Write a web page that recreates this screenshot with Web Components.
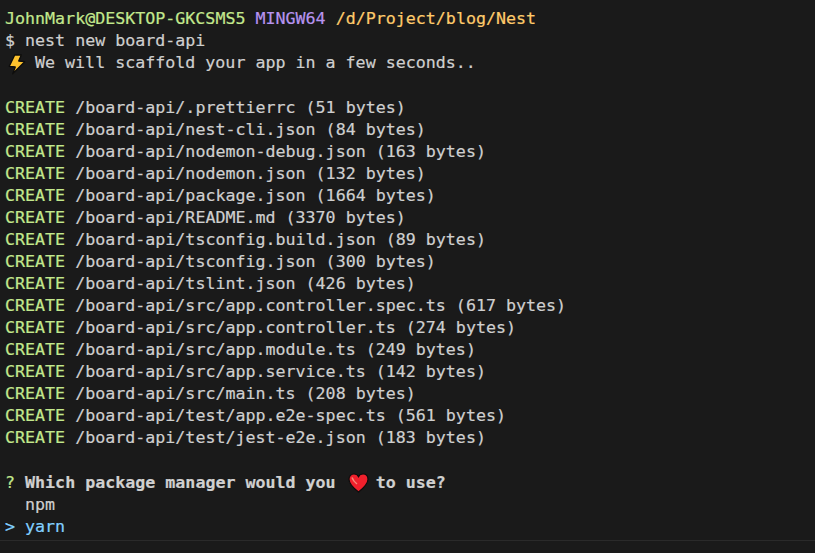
<!DOCTYPE html>
<html>
<head>
<meta charset="utf-8">
<title>Terminal</title>
<style>
  html, body { margin: 0; height: 100%; background: #1a1a1a; }
</style>
</head>
<body>
<term-window>
  <term-line><c-t k="green">JohnMark@DESKTOP-GKCSMS5</c-t> <c-t k="purple">MINGW64</c-t> <c-t k="yellow">/d/Project/blog/Nest</c-t></term-line>
  <term-line>$ nest new board-api</term-line>
  <term-line><term-icon name="bolt"></term-icon> We will scaffold your app in a few seconds..</term-line>
  <term-line blank></term-line>
  <create-line>/board-api/.prettierrc (51 bytes)</create-line>
  <create-line>/board-api/nest-cli.json (84 bytes)</create-line>
  <create-line>/board-api/nodemon-debug.json (163 bytes)</create-line>
  <create-line>/board-api/nodemon.json (132 bytes)</create-line>
  <create-line>/board-api/package.json (1664 bytes)</create-line>
  <create-line>/board-api/README.md (3370 bytes)</create-line>
  <create-line>/board-api/tsconfig.build.json (89 bytes)</create-line>
  <create-line>/board-api/tsconfig.json (300 bytes)</create-line>
  <create-line>/board-api/tslint.json (426 bytes)</create-line>
  <create-line>/board-api/src/app.controller.spec.ts (617 bytes)</create-line>
  <create-line>/board-api/src/app.controller.ts (274 bytes)</create-line>
  <create-line>/board-api/src/app.module.ts (249 bytes)</create-line>
  <create-line>/board-api/src/app.service.ts (142 bytes)</create-line>
  <create-line>/board-api/src/main.ts (208 bytes)</create-line>
  <create-line>/board-api/test/app.e2e-spec.ts (561 bytes)</create-line>
  <create-line>/board-api/test/jest-e2e.json (183 bytes)</create-line>
  <term-line blank></term-line>
  <term-line><c-t k="green">?</c-t> <c-t k="bold">Which package manager would you <term-icon name="heart"></term-icon> to use?</c-t></term-line>
  <term-line>  npm</term-line>
  <term-line><c-t k="cyan">&gt; yarn</c-t></term-line>
</term-window>
<script>
// lines use white-space: pre, so the shadow markup below must not have whitespace between nodes
class TermWindow extends HTMLElement {
  connectedCallback() {
    this.attachShadow({ mode: 'open' });
    this.shadowRoot.innerHTML = `<style>
        :host {
          display: block;
          height: 553px;
          background: #1a1a1a;
          color: #cfcfcf;
          font-family: "DejaVu Sans Mono", monospace;
          font-size: 16.65px;
          -webkit-text-stroke: 0.2px;
          overflow: hidden;
        }
        .body { padding: 8px 0 0 5px; height: 541px; box-sizing: border-box; border-bottom: 1px solid #2a2a2a; }
      </style><div class="body"><slot></slot></div>`;
  }
}

class TermLine extends HTMLElement {
  connectedCallback() {
    this.attachShadow({ mode: 'open' });
    this.shadowRoot.innerHTML = `<style>
        :host { display: block; height: 22px; line-height: 22px; white-space: pre; }
        :host([blank]) { height: 23px; }
      </style><slot></slot>`;
  }
}

class CreateLine extends HTMLElement {
  connectedCallback() {
    this.attachShadow({ mode: 'open' });
    this.shadowRoot.innerHTML = `<style>
        :host { display: block; height: 22px; line-height: 22px; white-space: pre; }
        b { font-weight: normal; color: #c3e88d; }
      </style><b>CREATE</b> <slot></slot>`;
  }
}

const colors = { green: '#c3e88d', purple: '#b794f0', yellow: '#ffcb6b', cyan: '#82d0ff', bold: '#d0d0d0' };

class CT extends HTMLElement {
  connectedCallback() {
    const k = this.getAttribute('k');
    this.attachShadow({ mode: 'open' });
    this.shadowRoot.innerHTML = `<style>
        :host { color: ${colors[k]}; font-weight: ${k === 'bold' ? 'bold' : 'normal'}; }
      </style><slot></slot>`;
  }
}

const icons = {
  bolt: '<path d="M9.7 1 L16.3 1 L13.7 7 L19.7 7.7 L7.7 19.7 L10.3 13 L4.3 12.3 Z" fill="#fdc22d" stroke="#0c0c0c" stroke-width="1.3" stroke-linejoin="round"/>',
  heart: '<path d="M12.5 18 C6 13 3 9.5 3 5.3 C3 2 5.2 0 8 0 C10 0 11.7 1 12.5 2.7 C13.3 1 15 0 17 0 C19.8 0 22 2 22 5.3 C22 9.5 19 13 12.5 18 Z" fill="#f0202c" stroke="#0c0c0c" stroke-width="1.2"/><path d="M6 3.5 C7 6.5 9 8.5 11 10" fill="none" stroke="#f48a7a" stroke-width="1.5"/>'
};

class TermIcon extends HTMLElement {
  connectedCallback() {
    this.attachShadow({ mode: 'open' });
    this.shadowRoot.innerHTML = `<style>
        :host { display: inline-block; width: 20px; height: 22px; vertical-align: top; }
        svg { display: block; width: 20px; height: 20px; margin-top: 2px; overflow: visible; }
      </style><svg viewBox="0 0 20 20">${icons[this.getAttribute('name')]}</svg>`;
  }
}

customElements.define('term-window', TermWindow);
customElements.define('term-line', TermLine);
customElements.define('create-line', CreateLine);
customElements.define('c-t', CT);
customElements.define('term-icon', TermIcon);
</script>
</body>
</html>
